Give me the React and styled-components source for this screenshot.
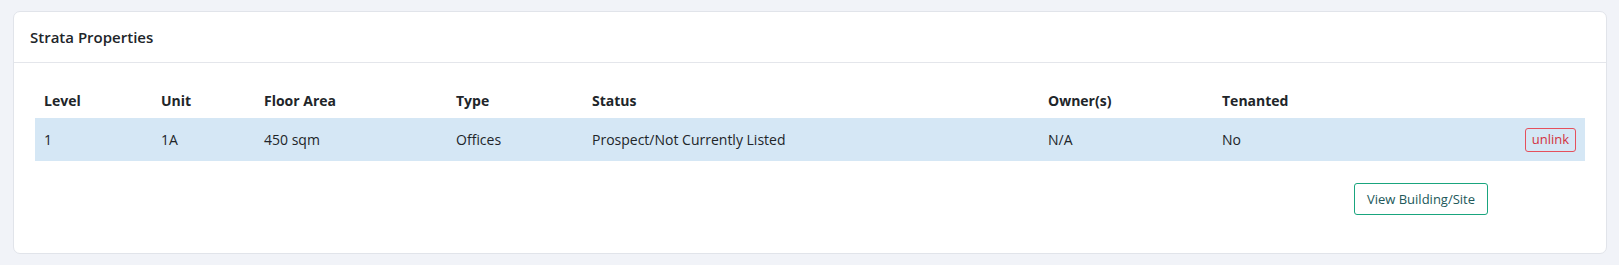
import React from "react";
import styled, { createGlobalStyle } from "styled-components";

const GlobalStyle = createGlobalStyle`
  html, body {
    margin: 0;
    padding: 0;
    background: #f1f3f8;
    font-family: "Open Sans", "Noto Sans", sans-serif;
    color: #212529;
  }
  * {
    box-sizing: border-box;
  }
`;

const Page = styled.div`
  padding: 11px 12px 11px 13px;
`;

const Card = styled.section`
  background: #ffffff;
  border: 1px solid #e1e4ea;
  border-radius: 7px;
`;

const CardHeader = styled.header`
  height: 51px;
  display: flex;
  align-items: center;
  padding: 0 16px;
  border-bottom: 1px solid #e4e6eb;

  h3 {
    margin: 0;
    font-size: 15px;
    font-weight: 600;
    color: #212529;
  }
`;

const CardBody = styled.div`
  padding: 20px 21px 38px;
`;

const Table = styled.table`
  width: 100%;
  border-collapse: collapse;
  table-layout: fixed;
  font-size: 14px;
`;

const Th = styled.th`
  text-align: left;
  font-weight: 700;
  height: 35px;
  padding: 0 9px;
  vertical-align: middle;
`;

const Row = styled.tr`
  background: ${(p) => (p.$highlight ? "#d5e7f5" : "transparent")};
`;

const Td = styled.td`
  height: 43px;
  padding: 0 9px;
  vertical-align: middle;
  text-align: ${(p) => (p.$right ? "right" : "left")};
`;

const UnlinkButton = styled.button`
  font-family: inherit;
  font-size: 13px;
  line-height: 1;
  color: #d2323f;
  background: transparent;
  border: 1px solid #e5505c;
  border-radius: 3px;
  height: 24px;
  padding: 0 6px;
  cursor: pointer;
`;

const Footer = styled.div`
  display: flex;
  justify-content: flex-end;
  padding: 22px 97px 0 0;
`;

const OutlineButton = styled.button`
  font-family: inherit;
  font-size: 13px;
  color: #21585a;
  background: #ffffff;
  border: 1px solid #19a57e;
  border-radius: 3px;
  height: 32px;
  width: 134px;
  padding: 0;
  cursor: pointer;
`;

const columns = [
  { label: "Level", width: 117 },
  { label: "Unit", width: 103 },
  { label: "Floor Area", width: 192 },
  { label: "Type", width: 136 },
  { label: "Status", width: 456 },
  { label: "Owner(s)", width: 174 },
  { label: "Tenanted", width: 200 },
  { label: "", width: null },
];

const rows = [
  {
    level: "1",
    unit: "1A",
    area: "450 sqm",
    type: "Offices",
    status: "Prospect/Not Currently Listed",
    owners: "N/A",
    tenanted: "No",
  },
];

export default function App() {
  return (
    <>
      <GlobalStyle />
      <Page>
        <Card>
          <CardHeader>
            <h3>Strata Properties</h3>
          </CardHeader>
          <CardBody>
            <Table>
              <colgroup>
                {columns.map((c, i) => (
                  <col key={i} style={c.width ? { width: c.width } : undefined} />
                ))}
              </colgroup>
              <thead>
                <tr>
                  {columns.map((c, i) => (
                    <Th key={i}>{c.label}</Th>
                  ))}
                </tr>
              </thead>
              <tbody>
                {rows.map((r, i) => (
                  <Row key={i} $highlight>
                    <Td>{r.level}</Td>
                    <Td>{r.unit}</Td>
                    <Td>{r.area}</Td>
                    <Td>{r.type}</Td>
                    <Td>{r.status}</Td>
                    <Td>{r.owners}</Td>
                    <Td>{r.tenanted}</Td>
                    <Td $right>
                      <UnlinkButton>unlink</UnlinkButton>
                    </Td>
                  </Row>
                ))}
              </tbody>
            </Table>
            <Footer>
              <OutlineButton>View Building/Site</OutlineButton>
            </Footer>
          </CardBody>
        </Card>
      </Page>
    </>
  );
}
